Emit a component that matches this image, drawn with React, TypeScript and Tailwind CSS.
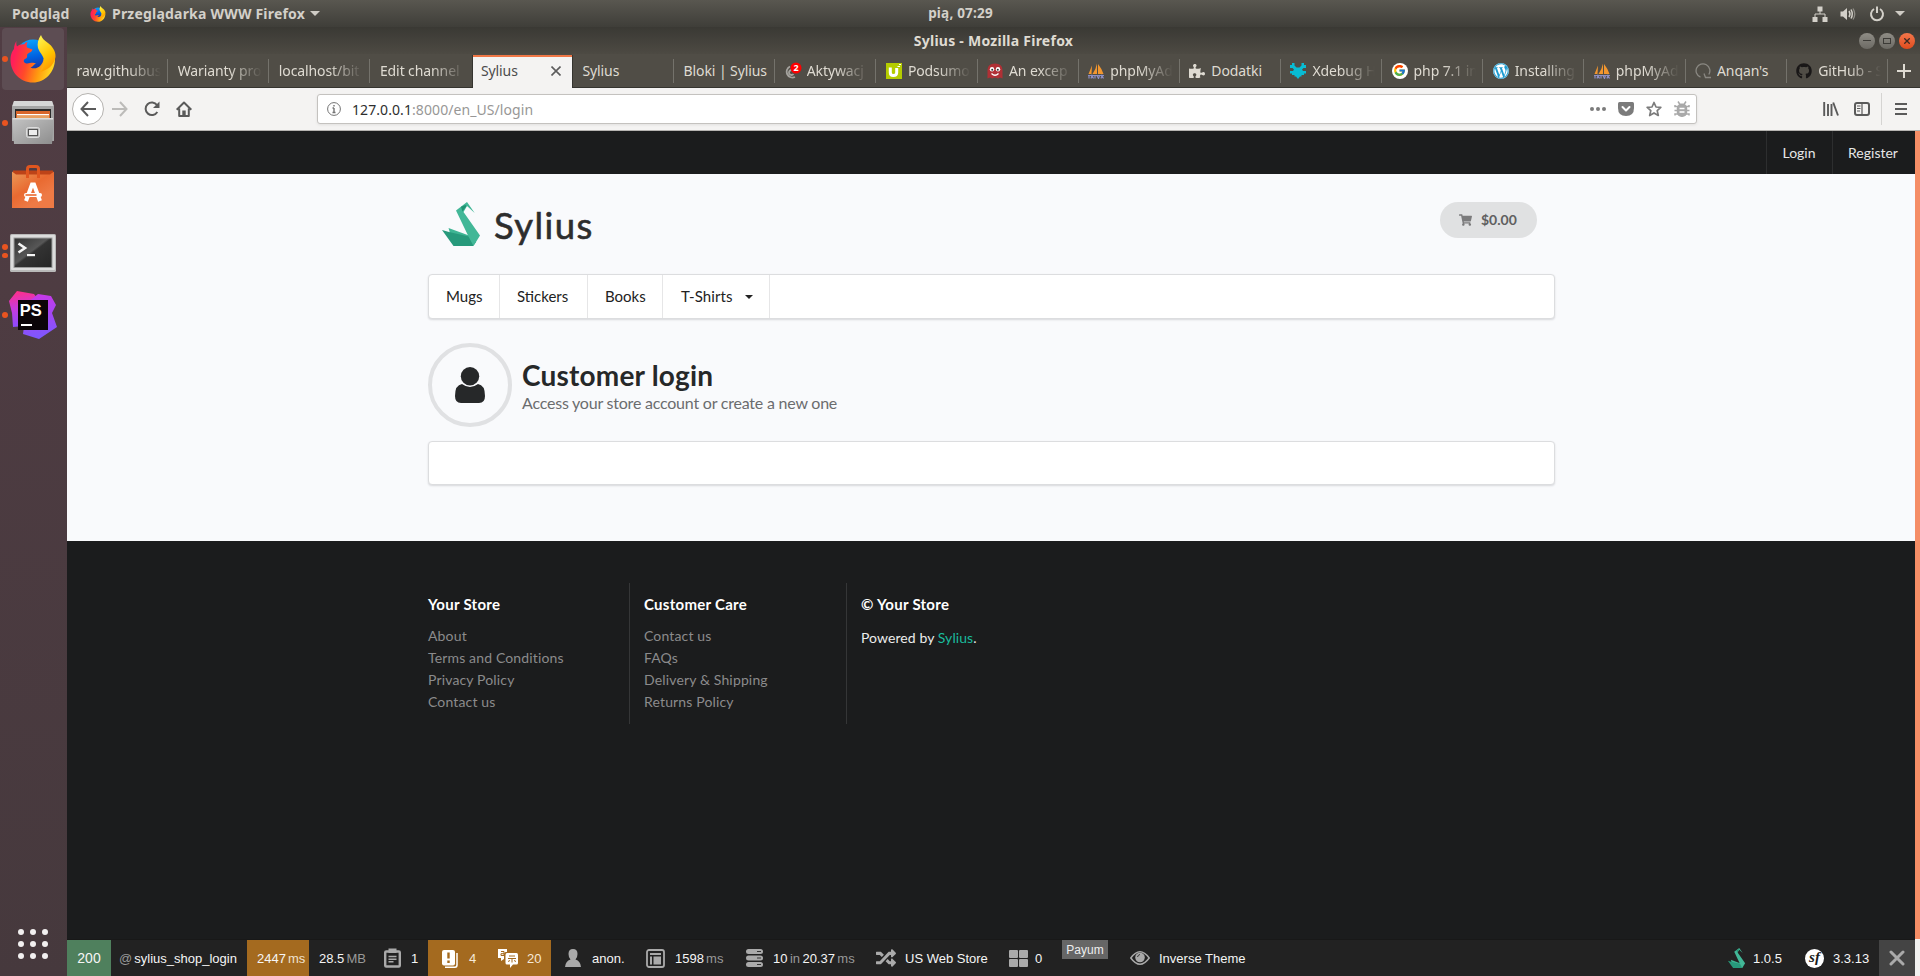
import React from "react";
import { FaGithub, FaWordpress, FaPuzzlePiece, FaGetPocket, FaShoppingCart, FaRandom } from "react-icons/fa";
import { FcGoogle } from "react-icons/fc";

const Firefox = ({ className }: { className: string }) => (
  <svg viewBox="0 0 46 48" className={className}>
    <defs>
      <linearGradient id="fxBody" x1="0.1" y1="0.3" x2="0.95" y2="0.5">
        <stop offset="0" stopColor="#ff1f5a" />
        <stop offset="0.35" stopColor="#ff4a2a" />
        <stop offset="0.7" stopColor="#ff9a0f" />
        <stop offset="1" stopColor="#ffd21f" />
      </linearGradient>
      <linearGradient id="fxGlobe" x1="0.3" y1="0" x2="0.5" y2="1">
        <stop offset="0" stopColor="#0aa5ff" />
        <stop offset="0.5" stopColor="#0060df" />
        <stop offset="1" stopColor="#2d1a78" />
      </linearGradient>
      <linearGradient id="fxTail" x1="0.2" y1="0" x2="0.6" y2="1">
        <stop offset="0" stopColor="#fff44f" />
        <stop offset="0.6" stopColor="#ffc400" />
        <stop offset="1" stopColor="#ff9100" />
      </linearGradient>
    </defs>
    <circle cx="23" cy="23" r="18.5" fill="url(#fxGlobe)" />
    <path d="M6.500 6C6 8.500 6.500 10.500 7 11.500C9 10 12 9 14 9.500C15 7.800 16.500 7 17.500 7C16.500 9 16.500 11 17 12.500L22.500 14.500C22 17 19 17.500 17.500 19C16.500 20.500 18 22.500 16 23.500C14 24 13 26 14.500 27.500C17 30 22 26.500 26 28.500C23 29.500 24 31.500 20.500 32.500C27 35.500 33 30 33.500 24L45 24C45 37 35 47.500 23 47.500C10 47.500 0.500 37 0.500 25C0.500 19 2.500 16 4 14C4 11 5 8 6.500 6Z" fill="url(#fxBody)" />
    <path d="M31 0C28 4 27 9 28 13C30 19 35 21 34 29C33.500 33 32 35 30 37C37 35 44 31 45.500 22C46 16 42 11 38 8C34 5.500 32 3 31 0Z" fill="url(#fxTail)" />
  </svg>
);

const Files = () => (
  <svg viewBox="0 0 42 44" className="h-[44px] w-[42px]">
    <defs>
      <linearGradient id="cab" x1="0" y1="0" x2="1" y2="1">
        <stop offset="0" stopColor="#c4c4c4" />
        <stop offset="1" stopColor="#8d8d8d" />
      </linearGradient>
    </defs>
    <path d="M2 0H40L42 5V40H0V5Z" fill="#a5a5a5" />
    <path d="M2 0H40L41.500 5H0.500Z" fill="#d6d6d6" />
    <rect x="3" y="8" width="36" height="12" fill="#2b2b2b" />
    <rect x="4" y="10" width="34" height="8" fill="#d9662b" />
    <rect x="5" y="13" width="32" height="1.500" fill="#fff" />
    <rect x="5" y="14.500" width="32" height="3" fill="#e8a061" />
    <path d="M0 17H42L40 43H2Z" fill="url(#cab)" />
    <rect x="1" y="17" width="40" height="1.500" fill="#dcdcdc" />
    <rect x="14.500" y="26.500" width="13" height="10" rx="2" fill="#b5b5b5" stroke="#dedede" />
    <rect x="16.500" y="28.500" width="9" height="6" fill="#ececec" stroke="#555" />
  </svg>
);

const Software = () => (
  <svg viewBox="0 0 42 44" className="h-[44px] w-[42px]">
    <defs>
      <linearGradient id="bag" x1="0" y1="0" x2="0.600" y2="0.800">
        <stop offset="0" stopColor="#ea9a58" />
        <stop offset="0.600" stopColor="#e96a31" />
        <stop offset="1" stopColor="#ee7a45" />
      </linearGradient>
    </defs>
    <path d="M1 5.500H41V11H1Z" fill="#bd4318" />
    <path d="M0 6.500L4 9.500H38L42 6.500V43H0Z" fill="url(#bag)" />
    <path d="M15.500 13V4Q15.500 1.500 18 1.500H24Q26.500 1.500 26.500 4V13" stroke="#e0561f" strokeWidth="3" fill="none" />
    <path d="M14 36L20 19.500H22L28 36" stroke="#fff" strokeWidth="4" fill="none" />
    <rect x="12" y="28" width="18" height="4" rx="2" fill="#fff" />
    <rect x="13.500" y="29.200" width="11" height="1.600" fill="#ea6a31" />
  </svg>
);

const Terminal = () => (
  <svg viewBox="0 0 46 38" className="h-[38px] w-[46px]">
    <defs>
      <linearGradient id="term" x1="0" y1="0" x2="1" y2="1">
        <stop offset="0" stopColor="#333" />
        <stop offset="0.450" stopColor="#575757" />
        <stop offset="0.500" stopColor="#333" />
        <stop offset="1" stopColor="#262626" />
      </linearGradient>
    </defs>
    <rect width="46" height="38" rx="1.500" fill="#b9b9b9" />
    <rect x="1" y="1" width="44" height="35" rx="1" fill="#dcdcdc" />
    <rect x="3.500" y="3.500" width="39" height="30.500" fill="#9c9c9c" />
    <rect x="4.500" y="4.500" width="37" height="28.500" fill="url(#term)" />
    <path d="M8.500 9.500L15 14L8.500 18.500" stroke="#f5f5f5" strokeWidth="2.600" fill="none" />
    <rect x="17" y="20" width="8" height="2.200" fill="#f5f5f5" />
  </svg>
);

const PhpStorm = () => (
  <svg viewBox="0 0 48 48" className="h-[48px] w-[48px]">
    <defs>
      <linearGradient id="psA" x1="0.200" y1="0" x2="0.300" y2="1">
        <stop offset="0" stopColor="#ff2f86" />
        <stop offset="0.500" stopColor="#c73be0" />
        <stop offset="1" stopColor="#8a4bff" />
      </linearGradient>
      <linearGradient id="psB" x1="0.500" y1="0" x2="0.600" y2="1">
        <stop offset="0" stopColor="#c838e8" />
        <stop offset="1" stopColor="#7a58ff" />
      </linearGradient>
    </defs>
    <path d="M8 0L25 3L28 7L18 20L15 35L4 36L3 22L0 10Z" fill="url(#psA)" />
    <path d="M29 3L42 5L47 14L43 22L48 36L30 48L14 43L18 12Z" fill="url(#psB)" />
    <rect x="9" y="9" width="30" height="30" fill="#0b0508" />
    <rect x="12" y="33" width="11" height="2" fill="#fff" />
    <text x="10.800" y="25" fontFamily="Liberation Sans, sans-serif" fontWeight="700" fontSize="16.500" fill="#fff">PS</text>
  </svg>
);

const Swan = ({ className }: { className: string }) => (
  <svg viewBox="0 0 38 44" className={className}>
    <path d="M6.500 26L27 33.500V38H10Z" fill="#3fb594" />
    <path d="M0 28L7 30L27 34.500L34 40L31 44H11.500Z" fill="#27997b" />
    <path d="M25 0L14 8.500L26.500 34.500L31.500 44L38 33.500L21.500 10L25 4L32.700 11Z" fill="#42b797" />
    <path d="M23.500 3L19 4.800L20.500 9.500L24.500 4Z" fill="#219373" />
  </svg>
);

const Sailboat = () => (
  <svg viewBox="0 0 16 16" className="h-4 w-4 shrink-0">
    <path d="M4 2.500L3.500 11H0.500Z M9 0.500V11H4.500Q8 6 9 0.500Z M10 1Q14 6 15.500 11H10Z" fill="#f2962f" />
    <path d="M0 12.500H16M1 15.500V13M3 15.500L4 12.500L5.500 15.500M7 12.500V15.500M9 12.500L10.500 15.500L11.500 12.500M13 15.500L14 12.500L15.500 15.500" stroke="#8d8fc4" strokeWidth="1.200" fill="none" />
  </svg>
);

const MailBadge = () => (
  <svg viewBox="0 0 17 17" className="h-[17px] w-[17px] shrink-0">
    <path d="M10 15A5.500 5.500 0 1 1 5 4.500M8.500 12A2.500 2.500 0 1 1 6.500 8" stroke="#a5a39e" strokeWidth="1.800" fill="none" />
    <circle cx="11" cy="6" r="5.500" fill="#f00" />
    <text x="11" y="9.200" textAnchor="middle" fontSize="9" fontWeight="700" fontFamily="Open Sans, sans-serif" fill="#fff">2</text>
  </svg>
);

const GreenU = () => (
  <svg viewBox="0 0 16 16" className="h-4 w-4 shrink-0">
    <rect width="16" height="16" fill="#b5cc00" />
    <path d="M4.300 4.500V9.500Q4.300 12.500 7.300 12.500Q10.700 12.500 10.700 9.500V5" stroke="#fff" strokeWidth="3" fill="none" />
    <path d="M11.500 3.500H14M13 1.500H15" stroke="#fff" strokeWidth="1.200" />
  </svg>
);

const RedGhost = () => (
  <svg viewBox="0 0 16 16" className="h-4 w-4 shrink-0">
    <path d="M0.500 7Q0.500 0.500 8 0.500T15.500 7V15.500L13 14.500L11 15.500L8 14.500L5 15.500L3 14.500L0.500 15.500Z" fill="#b03035" />
    <circle cx="5" cy="6.200" r="2.200" fill="#fff" />
    <circle cx="11" cy="6.200" r="2.200" fill="#fff" />
    <circle cx="5.200" cy="6.700" r="1" fill="#333" />
    <circle cx="10.800" cy="6.700" r="1" fill="#333" />
    <path d="M4.500 10.500Q8 14 11.500 10.500" stroke="#fff" strokeWidth="1.300" fill="none" />
  </svg>
);

const XdebugIcon = () => (
  <svg viewBox="0 0 16 16" className="h-4 w-4 shrink-0">
    <path d="M2 0H4.500V2.500L6.500 4.500H9.500L11.500 2.500V0H14V2H16V5H13.500L12 6.500L13 8H16V10.500H14V12H11.500V13.500H10L8 16L6 13.500H4.500V12H2V10.500H0V8H3L4 6.500L2.500 5H0V2H2Z" fill="#08bcd4" />
  </svg>
);

const QIcon = () => (
  <svg viewBox="0 0 16 16" className="h-4 w-4 shrink-0">
    <path d="M5.500 14.200A6.900 6.900 0 1 1 13.800 11.500M9 10.500L10.500 14.500H16" stroke="#8a8882" strokeWidth="1.300" fill="none" />
  </svg>
);

type TabDef = { t: string; icon?: React.ReactNode; fade?: boolean };
const tabsBefore: TabDef[] = [
  { t: "raw.githubus", fade: true },
  { t: "Warianty pro", fade: true },
  { t: "localhost/bit", fade: true },
  { t: "Edit channel", fade: true },
];
const tabsAfter: TabDef[] = [
  { t: "Sylius" },
  { t: "Bloki | Sylius" },
  { t: "Aktywacj", icon: <MailBadge />, fade: true },
  { t: "Podsumo", icon: <GreenU />, fade: true },
  { t: "An excep", icon: <RedGhost />, fade: true },
  { t: "phpMyAd", icon: <Sailboat />, fade: true },
  { t: "Dodatki", icon: <FaPuzzlePiece className="h-4 w-4 shrink-0 text-[#dfdbd2]" /> },
  { t: "Xdebug H", icon: <XdebugIcon />, fade: true },
  { t: "php 7.1 in", icon: <span className="flex h-4 w-4 shrink-0 items-center justify-center rounded-full bg-white"><FcGoogle className="h-[13px] w-[13px]" /></span>, fade: true },
  { t: "Installing", icon: <span className="h-4 w-4 shrink-0 rounded-full bg-[#1b9bd1]"><FaWordpress className="h-4 w-4 text-white" /></span>, fade: true },
  { t: "phpMyAd", icon: <Sailboat />, fade: true },
  { t: "Anqan's", icon: <QIcon /> },
  { t: "GitHub - S", icon: <FaGithub className="h-4 w-4 shrink-0 text-[#191717]" />, fade: true },
];

const Tab = ({ tab, last }: { tab: TabDef; last?: boolean }) => (
  <div className="flex h-full w-[101.15px] shrink-0 items-center pl-[9.5px]">
    {tab.icon && <span className="mr-[6px] flex w-4 shrink-0">{tab.icon}</span>}
    <span
      className={
        "min-w-0 flex-1 overflow-hidden whitespace-nowrap text-[14px] leading-5 tracking-[-0.1px] text-[#dfdbd2] " +
        (tab.fade ? "[mask-image:linear-gradient(to_right,black_calc(100%-34px),transparent_calc(100%-1px))]" : "")
      }
    >
      {tab.t}
    </span>
    <span className={"ml-[5px] h-6 w-px " + (last ? "bg-transparent" : "bg-[#74726b]")} />
  </div>
);

const DockCell = ({ dots, active, children }: { dots: number; active?: boolean; children: React.ReactNode }) => (
  <div className="relative flex h-16 w-full items-center justify-center">
    {active && <div className="absolute top-px left-[2px] h-[62px] w-[62px] rounded-[4px] bg-[#5d4d53]" />}
    <div className="absolute left-[2px] flex flex-col gap-[3px]">
      {Array.from({ length: dots }).map((_, i) => (
        <span key={i} className="h-[5.500px] w-[5.500px] rounded-full bg-[#e95420]" />
      ))}
    </div>
    <div className="relative flex pr-[1.500px]">{children}</div>
  </div>
);

const menu = [
  { t: "Mugs", w: "w-[71px]" },
  { t: "Stickers", w: "w-[88px]" },
  { t: "Books", w: "w-[75px]" },
  { t: "T-Shirts", w: "w-[107px]", caret: true },
];

const FooterCol = ({ title, links }: { title: string; links: string[] }) => (
  <>
    <h4 className="text-[15px] leading-[19px] font-bold tracking-[0.280px] text-white">{title}</h4>
    <ul className="mt-[11px] text-[14px] leading-[22px] tracking-[0.150px] text-[#8b8b8c]">
      {links.map((l) => (
        <li key={l}>{l}</li>
      ))}
    </ul>
  </>
);

const Dim = ({ children }: { children: React.ReactNode }) => <span className="text-[#999]">{children}</span>;

export default function App() {
  return (
    <div className="flex h-[976px] w-[1920px] flex-col overflow-hidden bg-[#1b1c1d]">
      <div className="grid h-[27px] shrink-0 grid-cols-[1fr_auto_1fr] items-center bg-gradient-to-b from-[#595750] to-[#3f3e39] font-['Noto_Sans',sans-serif] text-[14px] font-bold text-[#d3d0c9]">
        <div className="flex items-center pl-3">
          <span className="w-[58px] whitespace-nowrap tracking-[0.150px]">Podgląd</span>
          <Firefox className="ml-5 h-4 w-4" />
          <span className="ml-[6px] w-[195px] whitespace-nowrap tracking-[0.200px]">Przeglądarka WWW Firefox</span>
          <span className="ml-[3px] border-x-[5px] border-t-[5px] border-x-transparent border-t-[#cfccc5]" />
        </div>
        <span className="pl-px text-[13.500px] tracking-[0.200px]">pią, 07:29</span>
        <div className="flex items-center justify-end pr-[15px]">
          <svg viewBox="0 0 16 16" className="h-4 w-4" fill="#d3d0c9">
            <path d="M5.500 0.500h5v5h-5zM0.500 11h5v5h-5zM10.500 11h5v5h-5z" />
            <path d="M8 5V8M3 11V8H13V11" stroke="#d3d0c9" fill="none" />
          </svg>
          <svg viewBox="0 0 16 16" className="ml-3 h-4 w-4" fill="#d3d0c9">
            <path d="M0.500 5.500H3L7 2V14L3 10.500H0.500Z" />
            <path d="M9 5Q11 8 9 11M11 3.500Q13.500 8 11 12.500" stroke="#d3d0c9" strokeWidth="1.500" fill="none" />
            <path d="M13 2.500Q16.500 8 13 13.500" stroke="#8f8d86" strokeWidth="1.300" fill="none" />
          </svg>
          <svg viewBox="0 0 16 16" className="ml-[13px] h-4 w-4" fill="none" stroke="#d3d0c9" strokeWidth="2">
            <path d="M5 3A6 6 0 1 0 11 3M8 0.500V7" />
          </svg>
          <span className="ml-[10px] border-x-[5px] border-t-[5px] border-x-transparent border-t-[#cfccc5]" />
        </div>
      </div>

      <div className="flex min-h-0 flex-1">
        <aside className="flex w-[67px] shrink-0 flex-col items-center bg-gradient-to-b from-[#513d44] to-[#46393d]">
          <DockCell dots={1} active><Firefox className="h-12 w-[46px]" /></DockCell>
          <DockCell dots={1}><Files /></DockCell>
          <DockCell dots={0}><Software /></DockCell>
          <DockCell dots={2}><span className="flex pt-1"><Terminal /></span></DockCell>
          <DockCell dots={1}><PhpStorm /></DockCell>
          <div className="mt-auto mb-[17px] ml-[-1px] grid grid-cols-3 gap-[6px]">
            {Array.from({ length: 9 }).map((_, i) => (
              <span key={i} className="h-[6px] w-[6px] rounded-full bg-[#f2f0f0]" />
            ))}
          </div>
        </aside>

        <div className="flex min-w-0 flex-1 flex-col">
          <div className="grid h-[27px] shrink-0 grid-cols-[1fr_auto_1fr] items-center bg-gradient-to-b from-[#3a3934] to-[#4d4a43] font-['Noto_Sans',sans-serif]">
            <span />
            <span className="text-[14px] leading-5 font-bold tracking-[0.250px] text-[#dfdbd2]">Sylius - Mozilla Firefox</span>
            <div className="flex justify-end gap-1 pr-[5px]">
              <span className="flex h-4 w-4 items-center justify-center rounded-full bg-gradient-to-b from-[#8f8d86] to-[#6c6a64]">
                <span className="h-px w-2 bg-[#3c3b37]" />
              </span>
              <span className="flex h-4 w-4 items-center justify-center rounded-full bg-gradient-to-b from-[#8f8d86] to-[#6c6a64]">
                <span className="h-[6px] w-2 border border-[#3c3b37]" />
              </span>
              <span className="flex h-4 w-4 items-center justify-center rounded-full bg-gradient-to-b from-[#f4764a] to-[#df4b1b]">
                <svg viewBox="0 0 6 6" className="h-[6px] w-[6px]" stroke="#3c2a22" strokeWidth="1.300"><path d="M0.300 0.300L5.700 5.700M5.700 0.300L0.300 5.700" /></svg>
              </span>
            </div>
          </div>

          <div className="flex h-[34px] shrink-0 border-b border-[#35342f] bg-[#504d46] font-['Noto_Sans',sans-serif]">
            {tabsBefore.map((tab, i) => <Tab key={i} tab={tab} last={i === 3} />)}
            <div className="mt-px -mb-px ml-[1.400px] flex h-[33px] w-[99px] shrink-0 items-center border-t-2 border-[#f07746] bg-[#f4f3f2] pb-[3px] pl-[8px] shadow-[0_0_0_1px_#35342f] [clip-path:inset(0_-1px)]">
              <span className="w-[70px] text-[14px] leading-5 tracking-[-0.100px] text-[#4c4c4c]">Sylius</span>
              <svg viewBox="0 0 10 10" className="h-[10px] w-[10px]" stroke="#5c5c5c" strokeWidth="1.600"><path d="M0.500 0.500L9.500 9.500M9.500 0.500L0.500 9.500" /></svg>
            </div>
            <div className="w-px shrink-0" />
            {tabsAfter.map((tab, i) => <Tab key={i} tab={tab} />)}
            <svg viewBox="0 0 14 14" className="mt-[10px] ml-[9px] h-[14px] w-[14px] shrink-0" stroke="#dfdbd2" strokeWidth="2"><path d="M7 0V14M0 7H14" /></svg>
          </div>

          <div className="flex h-[43px] shrink-0 items-center border-b border-[#b6b4b1] bg-[#f4f3f2] pl-[5px]">
            <span className="flex h-8 w-8 items-center justify-center rounded-full border border-[#b5b3b0] bg-white">
              <svg viewBox="0 0 16 16" className="h-4 w-4" fill="none" stroke="#5a5a5a" strokeWidth="2"><path d="M8 1L1.500 8L8 15M1.500 8H16" /></svg>
            </span>
            <svg viewBox="0 0 16 16" className="ml-2 h-4 w-4" fill="none" stroke="#bcbbb9" strokeWidth="2"><path d="M8 1L14.500 8L8 15M14.500 8H0" /></svg>
            <svg viewBox="0 0 16 16" className="ml-[16px] h-4 w-4" fill="none" stroke="#5a5a5a" strokeWidth="2">
              <path d="M13 4A6.300 6.300 0 1 0 13.300 11" />
              <path d="M15.500 0.500V7H9Z" fill="#5a5a5a" stroke="none" />
            </svg>
            <svg viewBox="0 0 16 16" className="ml-4 h-4 w-4" fill="none" stroke="#5a5a5a" strokeWidth="2">
              <path d="M0.700 8.700L8 1.500L15.300 8.700M3.200 7.500V15H12.800V7.500" strokeLinejoin="round" />
              <path d="M6.300 15V9.500H9.700V15Z" fill="#5a5a5a" stroke="none" />
            </svg>
            <div className="ml-[125px] flex h-[30px] w-[1380px] items-center rounded-[3px] border border-[#c4c2bf] bg-white pl-[9px] shadow-[0_1px_3px_rgba(0,0,0,0.080)]">
              <svg viewBox="0 0 14 14" className="h-[14px] w-[14px]" fill="none" stroke="#737373">
                <circle cx="7" cy="7" r="6.400" />
                <path d="M7 6V10.500M5.500 6H7M5.500 10.500H8.500M6.300 3.700H7.700" strokeWidth="1.400" />
              </svg>
              <span className="ml-[11px] font-['Noto_Sans',sans-serif] text-[14px] tracking-[0.080px] text-[#989796]">
                <span className="text-[#2e2e2e]">127.0.0.1</span>:8000/en_US/login
              </span>
              <div className="ml-auto flex items-center pr-[6px]">
                <svg viewBox="0 0 16 4" className="h-1 w-4" fill="#7b7b7b"><circle cx="2" cy="2" r="2" /><circle cx="8" cy="2" r="2" /><circle cx="14" cy="2" r="2" /></svg>
                <svg viewBox="0 0 16 14" className="ml-[12px] h-[14px] w-4">
                  <path d="M1.500 0H14.500Q16 0 16 1.500V6Q16 14 8 14T0 6V1.500Q0 0 1.500 0Z" fill="#7b7b7b" />
                  <path d="M4.500 5L8 8.500L11.500 5" fill="none" stroke="#fff" strokeWidth="2" strokeLinecap="round" strokeLinejoin="round" />
                </svg>
                <svg viewBox="0 0 16 16" className="ml-[12px] h-4 w-4" fill="none" stroke="#7b7b7b" strokeWidth="1.700">
                  <path d="M8 1.500L10 6L14.800 6.400L11.200 9.600L12.300 14.500L8 11.900L3.700 14.500L4.800 9.600L1.200 6.400L6 6Z" strokeLinejoin="round" />
                </svg>
                <svg viewBox="0 0 16 16" className="ml-[12px] h-4 w-4" fill="#a9a9a9">
                  <rect x="2.800" y="2.500" width="10.400" height="13.500" rx="4.800" />
                  <path d="M4 0.500L6 3.500M12 0.500L10 3.500M1 4V5.500H4M15 4V5.500H12M0.500 9.500H4M15.500 9.500H12M1 14.500V13H4M15 14.500V13H12" stroke="#a9a9a9" strokeWidth="1.500" fill="none" />
                  <path d="M5.500 7.500H10.500M5.500 11H10.500" stroke="#fff" strokeWidth="1.300" />
                </svg>
              </div>
            </div>
            <svg viewBox="0 0 16 14" className="ml-[126px] h-[14px] w-4" stroke="#5a5a5a" strokeWidth="1.900"><path d="M1.200 0V14M5 2V14M8.500 2V14M10.200 0.500L15 13.500" /></svg>
            <svg viewBox="0 0 16 14" className="ml-[15px] h-[14px] w-4" fill="none" stroke="#5a5a5a">
              <rect x="1" y="1" width="14" height="12" rx="2" strokeWidth="2" />
              <path d="M8 1V13M3 4H6.500M3 6.500H6.500M3 9H6" strokeWidth="1.200" />
            </svg>
            <span className="ml-[11px] h-8 w-px bg-[#d5d4d2]" />
            <svg viewBox="0 0 12 12" className="ml-[13px] h-3 w-3" stroke="#5a5a5a" strokeWidth="2"><path d="M0 1H12M0 6H12M0 11H12" /></svg>
          </div>

          <div className="flex min-h-0 flex-1">
            <div className="flex w-[1848px] shrink-0 flex-col font-['Lato',sans-serif]">
              <div className="flex h-[43px] shrink-0 justify-end bg-[#1b1c1d] text-[14px] text-[#e6e6e6]">
                <span className="flex w-[66px] items-center justify-center border-l border-[#2d2e2f] pr-px">Login</span>
                <span className="flex w-[83px] items-center justify-center border-l border-[#2d2e2f] pr-[2px]">Register</span>
              </div>

              <main className="flex h-[367px] shrink-0 flex-col bg-[#f9fafc] pr-[360px] pl-[361px]">
                <div className="flex h-[100px] items-start justify-between pt-7 pr-[18px] pl-[14px]">
                  <div className="flex">
                    <Swan className="h-[44px] w-[38px]" />
                    <span className="ml-[14px] text-[36.500px] leading-[46px] tracking-[1.400px] text-[#2d2d2d] [-webkit-text-stroke:0.600px_#2d2d2d]">Sylius</span>
                  </div>
                  <div className="flex h-9 w-[97px] items-center rounded-full bg-[#e0e1e2] pb-px pl-[19px] text-[14px] font-bold text-[#5f5f60]">
                    <FaShoppingCart className="mr-[9px] h-[12px] w-[13px] text-[#7b7b7c]" />
                    $0.00
                  </div>
                </div>
                <nav className="flex h-[45px] shrink-0 rounded-[4px] border border-[#dcdddf] bg-white text-[15px] text-[#222] shadow-[0_1px_2px_rgba(34,36,38,0.150)]">
                  {menu.map((m) => (
                    <span key={m.t} className={"flex items-center border-r border-[#e6e6e7] " + m.w + (m.caret ? " pl-[18px] tracking-[0.1px]" : " pl-[17px]")}>
                      {m.t}
                      {m.caret && <span className="mt-px ml-[12px] border-x-[4px] border-t-[4px] border-x-transparent border-t-[#222]" />}
                    </span>
                  ))}
                </nav>
                <div className="mt-6 flex h-[84px] shrink-0">
                  <span className="flex h-[84px] w-[84px] items-center justify-center rounded-full border-4 border-[#e0e1e3]">
                    <svg viewBox="0 0 30 36" className="h-9 w-[30px]" fill="#262829">
                      <circle cx="15" cy="9.200" r="9.200" />
                      <path d="M7 17Q0 18 0 29Q0 36 6 36H24Q30 36 30 29Q30 18 23 17Q15 23 7 17Z" />
                    </svg>
                  </span>
                  <div className="ml-[10px] pt-[15px]">
                    <h1 className="text-[28px] leading-[34px] font-bold tracking-[0.200px] text-[#262829]">Customer login</h1>
                    <p className="mt-px text-[16px] leading-[20px] tracking-[-0.220px] text-[#6b6c6e]">Access your store account or create a new one</p>
                  </div>
                </div>
                <div className="mt-[14px] h-[44px] shrink-0 rounded-[4px] border border-[#dcdddf] bg-white shadow-[0_1px_2px_rgba(34,36,38,0.150)]" />
              </main>

              <footer className="flex min-h-0 flex-1 pt-[42px] pl-[361px]">
                <div className="h-[141px] w-[202px] border-r border-[#353637] pt-3"><FooterCol title="Your Store" links={["About", "Terms and Conditions", "Privacy Policy", "Contact us"]} /></div>
                <div className="h-[141px] w-[217px] border-r border-[#353637] pt-3 pl-[14px]"><FooterCol title="Customer Care" links={["Contact us", "FAQs", "Delivery & Shipping", "Returns Policy"]} /></div>
                <div className="pt-3 pl-[14px]">
                  <h4 className="text-[15px] leading-[19px] font-bold tracking-[0.280px] text-white">© Your Store</h4>
                  <p className="mt-[13px] text-[14px] leading-[22px] tracking-[0.080px] text-[#ececec]">Powered by <span className="text-[#1abb9c]">Sylius</span>.</p>
                </div>
              </footer>

              <div className="flex h-[37px] shrink-0 items-center border-t border-[#181818] bg-[#222] font-['Liberation_Sans',Arial,sans-serif] text-[13px] whitespace-nowrap text-[#f5f5f5] [&>span]:pt-px">
                <span className="flex h-full w-11 items-center justify-center bg-[#4f805d] text-[14px]">200</span>
                <span className="w-[136px] pl-[8px] [word-spacing:-1.500px]"><Dim>@</Dim> sylius_shop_login</span>
                <span className="flex h-full w-[62px] items-center bg-[#a46a1f] pl-[10px]">2447<span className="ml-[2px] text-[#f0e2cf]">ms</span></span>
                <span className="w-[75px] pl-[10px] [word-spacing:-1.500px]">28.5 <Dim>MB</Dim></span>
                <svg viewBox="0 0 17 20" className="h-5 w-[17px]" fill="none" stroke="#aaa">
                  <rect x="1.200" y="3.500" width="14.600" height="15" rx="1" strokeWidth="2.400" />
                  <rect x="4.500" y="0.500" width="8" height="4.500" fill="#aaa" stroke="none" />
                  <path d="M4.500 8.500H12.500M4.500 11.200H12.500M4.500 13.800H9.500" strokeWidth="1.400" />
                </svg>
                <span className="w-[27px] pl-[10px]">1</span>
                <span className="flex h-full w-[123px] items-center bg-[#a46a1f] pl-[14px]">
                  <svg viewBox="0 0 16 18" className="h-[18px] w-4" fill="#fff">
                    <rect width="13" height="15.500" rx="2" />
                    <path d="M15 3V15Q15 17.200 13 17.200H3" stroke="#fff" strokeWidth="1.500" fill="none" />
                    <path d="M5.300 2.500H7.700V8.500H5.300ZM5.300 10.500H7.700V13H5.300Z" fill="#a46a1f" />
                  </svg>
                  <span className="ml-[11px] w-[29px] text-[#f6e9d8]">4</span>
                  <svg viewBox="0 0 20 19" className="h-[19px] w-5" fill="#fff">
                    <path d="M0 0H9V3H8Q6 3 6 6V10L3 12V9H0Z" />
                    <path d="M9 4H18.500Q20 4 20 6V14Q20 15.500 18.500 15.500H15L12 19V15.500H9Q7.500 15.500 7.500 14V6Q7.500 4 9 4Z" />
                    <path d="M3 2.500H6V6.500H3V4.700H6M11 7H17M10 9.500H18M14 9.500V13.500M11.500 11L10.500 13M16.500 11L17.500 13" stroke="#a46a1f" fill="none" />
                  </svg>
                  <span className="ml-[9px] text-[#f6e9d8]">20</span>
                </span>
                <svg viewBox="0 0 16 18" className="ml-[14px] h-[18px] w-4" fill="#aaa"><path d="M8 0Q12.500 0 12.500 5Q12.500 8.500 10.500 10.500Q15.500 12 16 18H0Q0.500 12 5.500 10.500Q3.500 8.500 3.500 5Q3.500 0 8 0Z" /></svg>
                <span className="w-[65px] pl-[11px]">anon.</span>
                <svg viewBox="0 0 19 19" className="h-[19px] w-[19px]" fill="none" stroke="#aaa">
                  <rect x="1" y="1" width="17" height="17" rx="2" strokeWidth="1.800" />
                  <path d="M4 5H15M5 7.500V15.500" strokeWidth="2" />
                  <rect x="7.500" y="7.500" width="7.500" height="8" fill="#aaa" stroke="none" />
                </svg>
                <span className="w-[81px] pl-[10px] [word-spacing:-1.500px]">1598 <Dim>ms</Dim></span>
                <svg viewBox="0 0 17 18" className="h-[18px] w-[17px]" fill="#aaa">
                  <rect width="17" height="5" rx="2.500" /><rect y="6.500" width="17" height="5" rx="2.500" /><rect y="13" width="17" height="5" rx="2.500" />
                  <path d="M11 2.500H15M11 9H15M11 15.500H15" stroke="#333" />
                </svg>
                <span className="w-[113px] pl-[10px] [word-spacing:-1.200px]">10 <Dim>in</Dim> 20.37 <Dim>ms</Dim></span>
                <FaRandom className="h-5 w-5 text-[#aaa]" />
                <span className="w-[113px] pl-[9px]">US Web Store</span>
                <svg viewBox="0 0 19 17" className="h-[17px] w-[19px]" fill="#aaa">
                  <rect width="9" height="8" rx="1" /><rect x="10" width="9" height="8" rx="1" /><rect y="9" width="9" height="8" rx="1" /><rect x="10" y="9" width="9" height="8" rx="1" />
                </svg>
                <span className="w-[34px] pl-[7px]">0</span>
                <span className="flex h-[19px] w-[46px] items-center justify-center self-start bg-[#666] text-[12px] text-[#eee]">Payum</span>
                <svg viewBox="0 0 20 14" className="ml-[22px] h-[14px] w-5" fill="none" stroke="#aaa">
                  <path d="M0.800 7Q10 -5.500 19.200 7Q10 19.500 0.800 7Z" strokeWidth="1.500" />
                  <circle cx="10" cy="6.500" r="4.800" fill="#aaa" stroke="none" />
                  <path d="M7.500 6Q8 3.800 10 3.500" stroke="#333" />
                </svg>
                <span className="ml-[9px]">Inverse Theme</span>
                <div className="ml-auto flex h-full items-center">
                  <Swan className="h-5 w-[19px]" />
                  <span className="w-[59px] pt-px pl-[7px]">1.0.5</span>
                  <span className="flex h-[19px] w-[19px] items-center justify-center rounded-full bg-white pb-[2px] font-['Liberation_Serif',serif] text-[15px] leading-none font-bold text-[#1a1a1a] italic">sf</span>
                  <span className="w-[55px] pt-px pl-[9px]">3.3.13</span>
                  <span className="flex h-full w-9 items-center justify-center bg-[#444]">
                    <svg viewBox="0 0 16 16" className="h-4 w-4" stroke="#aaa" strokeWidth="3" strokeLinecap="round"><path d="M2 2L14 14M14 2L2 14" /></svg>
                  </span>
                </div>
              </div>
            </div>
            <div className="flex flex-1 flex-col bg-[#f2f1f0]">
              <div className="h-[808px] bg-[#f58d66]" />
            </div>
          </div>
        </div>
      </div>
    </div>
  );
}
